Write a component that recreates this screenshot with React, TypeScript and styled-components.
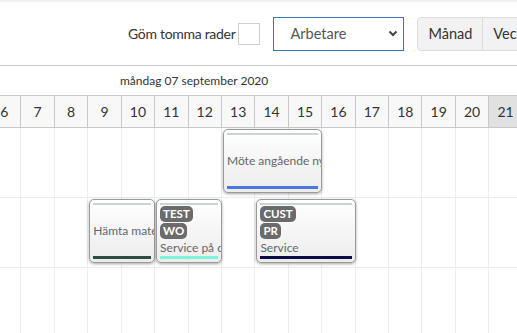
import React from "react";
import styled, { createGlobalStyle } from "styled-components";

const GlobalStyle = createGlobalStyle`
  body {
    margin: 0;
    background: #fff;
    font-family: Lato, "Open Sans", sans-serif;
    color: #333;
    overflow: hidden;
  }
`;

const COL = 33.43;
const HOURS = [6, 7, 8, 9, 10, 11, 12, 13, 14, 15, 16, 17, 18, 19, 20, 21];

const SPage = styled.div`
  width: 517px;
  height: 333px;
  overflow: hidden;
  border-top: 2px solid #f1f1f1;
  box-sizing: border-box;
`;

const SToolbar = styled.div`
  display: flex;
  align-items: center;
  height: 63px;
  padding-left: 128px;
  white-space: nowrap;
  border-bottom: 1px solid #c8c8c8;
`;

const SLabel = styled.span`
  flex-shrink: 0;
  font-size: 14px;
  letter-spacing: -0.3px;
  color: #333;
`;

const SCheck = styled.span`
  flex-shrink: 0;
  width: 20px;
  height: 20px;
  margin-left: 3px;
  border: 1px solid #cfcfcf;
  background: #fff;
`;

const SSelect = styled.div`
  display: flex;
  align-items: center;
  justify-content: space-between;
  flex-shrink: 0;
  box-sizing: border-box;
  width: 131px;
  height: 34px;
  margin-left: 13px;
  padding: 0 5px 0 16px;
  border: 1px solid #3f72c4;
  font-size: 14.5px;
  color: #555;
`;

const SGroup = styled.div`
  display: flex;
  flex-shrink: 0;
  margin-left: 13px;
`;

const SButton = styled.div<{ $first?: boolean }>`
  display: flex;
  align-items: center;
  box-sizing: border-box;
  height: 34px;
  padding: 0 10px;
  font-size: 14.5px;
  color: #333;
  background: #f2f2f2;
  border: 1px solid #dcdcdc;
  border-left: ${(p) => (p.$first ? "1px solid #dcdcdc" : "none")};
  border-radius: ${(p) => (p.$first ? "4px 0 0 4px" : "0")};
`;

const SDate = styled.div`
  height: 29px;
  line-height: 29px;
  padding-left: 120px;
  font-size: 12px;
  color: #333;
`;

const SGrid = styled.div`
  display: grid;
  grid-template-columns: repeat(16, ${COL}px);
  margin-left: -12px;
`;

const SHeadCell = styled.div<{ $today?: boolean }>`
  height: 31px;
  display: flex;
  align-items: center;
  justify-content: center;
  font-size: 14px;
  color: #333;
  background: ${(p) => (p.$today ? "#e1e1e1" : "#f8f8f8")};
  border-top: 1px solid #c8c8c8;
  border-bottom: 1px solid #c8c8c8;
  border-right: 1px solid #c8c8c8;
`;

const SRow = styled(SGrid)`
  height: 70px;
  border-bottom: 1px solid #ececec;
  box-sizing: border-box;
`;

const SCell = styled.div<{ $col: number }>`
  grid-row: 1;
  grid-column: ${(p) => p.$col};
  border-right: 1px solid #ececec;
`;

const SEvent = styled.div<{ $col: number; $span: number }>`
  grid-row: 1;
  grid-column: ${(p) => p.$col} / span ${(p) => p.$span};
  z-index: 1;
  display: flex;
  flex-direction: column;
  min-width: 0;
  margin: 1px 0 4px 1px;
  border: 1px solid #9a9a9a;
  border-radius: 5px;
  background: linear-gradient(#ffffff, #ececec);
  box-shadow: 0 1px 3px rgba(0, 0, 0, 0.35);
  overflow: hidden;
`;

const STopBar = styled.div`
  flex-shrink: 0;
  height: 2px;
  margin: 3px 3px 0;
  background: #cdd1dc;
`;

const SBottomBar = styled.div<{ $color: string }>`
  flex-shrink: 0;
  height: 3px;
  margin: 0 3px 3px;
  background: ${(p) => p.$color};
`;

const SContent = styled.div`
  flex: 1;
  display: flex;
  flex-direction: column;
  justify-content: center;
  align-items: flex-start;
  padding-left: 3px;
  overflow: hidden;
`;

const SBadge = styled.span`
  display: inline-block;
  height: 16px;
  line-height: 16px;
  padding: 0 3px;
  margin-bottom: 1px;
  border-radius: 5px;
  background: #6b6b6b;
  color: #fff;
  font-size: 11.5px;
  font-weight: 700;
`;

const STitle = styled.span`
  font-size: 12px;
  line-height: 16px;
  color: #666;
  white-space: nowrap;
`;

const Chevron = () => (
  <svg width="10" height="7" viewBox="0 0 10 7">
    <path d="M1.5 1.5 L5 5 L8.5 1.5" fill="none" stroke="#444" strokeWidth="2" />
  </svg>
);

interface IEvent {
  col: number;
  span: number;
  title: string;
  color: string;
  badges?: string[];
}

const ROWS: IEvent[][] = [
  [{ col: 8, span: 3, title: "Möte angående nytt system", color: "#4a78e0" }],
  [
    { col: 4, span: 2, title: "Hämta material", color: "#2e4b44" },
    { col: 6, span: 2, title: "Service på dator", color: "#7ff2da", badges: ["TEST", "WO"] },
    { col: 9, span: 3, title: "Service", color: "#0b0b45", badges: ["CUST", "PR"] },
  ],
  [],
];

const EventCard: React.FC<{ ev: IEvent }> = ({ ev }) => (
  <SEvent $col={ev.col} $span={ev.span}>
    <STopBar />
    <SContent>
      {ev.badges?.map((b) => (
        <SBadge key={b}>{b}</SBadge>
      ))}
      <STitle>{ev.title}</STitle>
    </SContent>
    <SBottomBar $color={ev.color} />
  </SEvent>
);

const App = () => (
  <SPage>
    <GlobalStyle />
    <SToolbar>
      <SLabel>Göm tomma rader</SLabel>
      <SCheck />
      <SSelect>
        <span>Arbetare</span>
        <Chevron />
      </SSelect>
      <SGroup>
        <SButton $first>Månad</SButton>
        <SButton>Vecka</SButton>
        <SButton>Dag</SButton>
      </SGroup>
    </SToolbar>
    <SDate>måndag 07 september 2020</SDate>
    <SGrid>
      {HOURS.map((h) => (
        <SHeadCell key={h} $today={h === 21}>
          {h}
        </SHeadCell>
      ))}
    </SGrid>
    {ROWS.map((row, i) => (
      <SRow key={i}>
        {HOURS.map((h, c) => (
          <SCell key={h} $col={c + 1} />
        ))}
        {row.map((ev) => (
          <EventCard key={ev.title} ev={ev} />
        ))}
      </SRow>
    ))}
  </SPage>
);

export default App;
